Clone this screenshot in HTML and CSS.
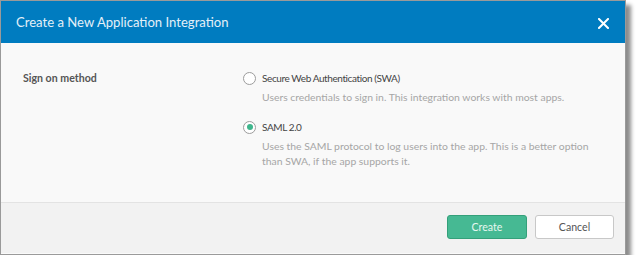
FILE: index.html
```html
<!DOCTYPE html>
<html>
<head>
<meta charset="utf-8">
<link rel="stylesheet" href="styles.css">
</head>
<body>
<div class="dialog">
  <div class="header">
    <span class="title">Create a New Application Integration</span>
    <svg class="close" width="11" height="11" viewBox="0 0 11 11"><path d="M1 1L10 10M10 1L1 10" stroke="#fff" stroke-width="2" stroke-linecap="square" fill="none"/></svg>
  </div>
  <div class="body">
    <div class="field-label">Sign on method</div>
    <div class="options">
      <div class="option">
        <div class="option-row"><span class="radio"></span><span class="option-title">Secure Web Authentication (SWA)</span></div>
        <div class="option-desc">Users credentials to sign in. This integration works with most apps.</div>
      </div>
      <div class="option">
        <div class="option-row"><span class="radio checked"></span><span class="option-title">SAML 2.0</span></div>
        <div class="option-desc">Uses the SAML protocol to log users into the app. This is a better option than SWA, if the app supports it.</div>
      </div>
    </div>
  </div>
  <div class="footer">
    <button class="btn btn-primary">Create</button>
    <button class="btn btn-default">Cancel</button>
  </div>
</div>
</body>
</html>
```
FILE: styles.css
```css
html, body {
  margin: 0;
  padding: 0;
  background: #ffffff;
}
body {
  font-family: Lato, "Open Sans", sans-serif;
}
.dialog {
  width: 624px;
  border: 1px solid #9a9a9a;
  background: #f9f9f9;
  box-shadow: 5px 5px 4px rgba(0, 0, 0, 0.45);
}
.header {
  height: 42px;
  background: #007cc0;
  display: flex;
  align-items: center;
  justify-content: space-between;
  padding: 0 16px 0 15px;
}
.title {
  color: #e4f0f8;
  font-size: 13.1px;
}
.close {
  display: block;
  margin-top: 2px;
}
.body {
  height: 160px;
  box-sizing: border-box;
  padding: 27px 20px 0 22px;
  display: grid;
  grid-template-columns: 220px 1fr;
  border-bottom: 1px solid #e3e3e3;
}
.field-label {
  font-size: 10.6px;
  font-weight: bold;
  color: #555;
  line-height: 16px;
  margin-top: 0;
}
.options {
  display: flex;
  flex-direction: column;
  gap: 14px;
}
.option-row {
  display: flex;
  align-items: center;
  gap: 6px;
  height: 16px;
}
.radio {
  width: 11px;
  height: 11px;
  border: 1px solid #9c9c9c;
  border-radius: 50%;
  background: #fff;
  box-sizing: content-box;
  position: relative;
}
.radio.checked::after {
  content: "";
  position: absolute;
  left: 2.5px;
  top: 2.5px;
  width: 6px;
  height: 6px;
  border-radius: 50%;
  background: #3fb68d;
}
.option-title {
  font-size: 10px;
  letter-spacing: -0.4px;
  color: #444;
}
.option-desc {
  font-size: 10.4px;
  color: #a6a6a6;
  line-height: 15px;
  margin-top: 4px;
  padding-left: 19px;
  max-width: 335px;
}
.footer {
  height: 51px;
  background: #f2f2f2;
  box-sizing: border-box;
  padding: 12px 11px 0 0;
  display: flex;
  justify-content: flex-end;
  gap: 8px;
  border-bottom: 1px solid #fafafa;
}
.btn {
  height: 24px;
  box-sizing: border-box;
  font-family: Lato, "Open Sans", sans-serif;
  font-size: 10.6px;
  border-radius: 3px;
  padding: 0;
  cursor: pointer;
}
.btn-primary {
  width: 80px;
  background: #46b993;
  border: 1px solid #34a07a;
  color: #e6f7f0;
}
.btn-default {
  width: 79px;
  background: #ffffff;
  border: 1px solid #c8c8c8;
  color: #555;
}
```
